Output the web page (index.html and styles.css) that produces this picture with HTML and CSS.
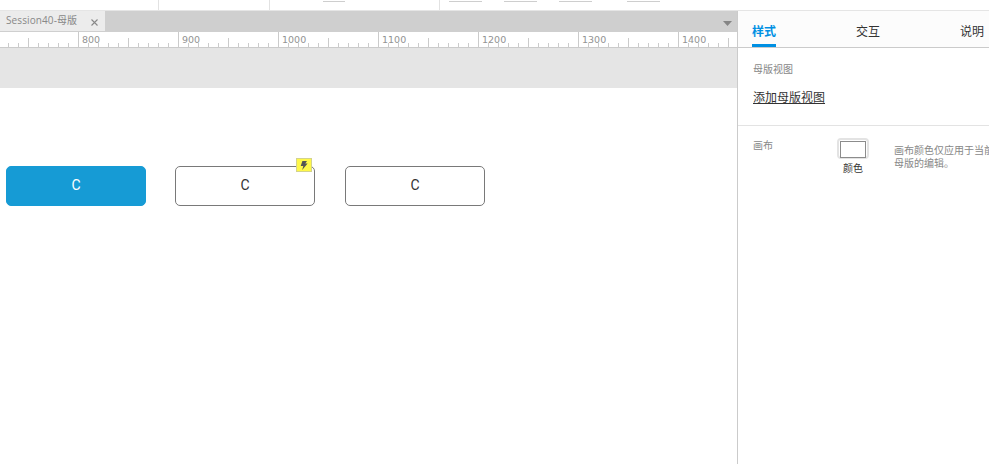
FILE: index.html
```html
<!DOCTYPE html>
<html lang="zh-CN">
<head>
<meta charset="utf-8">
<title>Session40-母版</title>
<link rel="stylesheet" href="styles.css">
</head>
<body>
<header class="toolbar">
  <div class="group g1"></div>
  <div class="group g2"></div>
  <div class="group g3"><span class="field short"></span></div>
  <div class="group g4"><span class="field"></span><span class="field"></span><span class="field"></span><span class="field last"></span></div>
</header>
<div class="workspace">
  <main class="editor">
    <div class="tabbar">
      <div class="file-tab"><span class="file-name">Session40-母版</span>
        <svg class="close" width="7" height="7" viewBox="0 0 7 7"><path d="M.5.5l6 6M6.5.5l-6 6"/></svg>
      </div>
      <svg class="caret" width="9" height="5" viewBox="0 0 9 5"><path d="M0 0h9L4.5 5z"/></svg>
    </div>
    <div class="ruler"><span>800</span><span>900</span><span>1000</span><span>1100</span><span>1200</span><span>1300</span><span>1400</span></div>
    <div class="outside"></div>
    <div class="canvas">
      <div class="button primary">C</div>
      <div class="button">C
        <span class="event"><svg width="8" height="9" viewBox="0 0 8 9"><path d="M2.4 0H7L5.3 2.6H7.6L2.2 9 3.3 4.9H.7z"/></svg></span>
      </div>
      <div class="button">C</div>
    </div>
  </main>
  <aside class="panel">
    <nav class="panel-tabs"><span class="active">样式</span><span>交互</span><span>说明</span></nav>
    <section class="views">
      <h2>母版视图</h2>
      <a class="add">添加母版视图</a>
    </section>
    <section class="fill">
      <h2>画布</h2>
      <div class="color"><span class="swatch"></span><span class="label">颜色</span></div>
      <p class="hint">画布颜色仅应用于当前<br>母版的编辑。</p>
    </section>
  </aside>
</div>
</body>
</html>
```
FILE: styles.css
```css
* { box-sizing: border-box; }
body {
  margin: 0;
  width: 989px;
  height: 464px;
  overflow: hidden;
  background: #fff;
  color: #333;
  font-family: "Open Sans", "Noto Sans CJK SC", sans-serif;
  font-size: 12px;
}
.toolbar { display: flex; height: 11px; border-bottom: 1px solid #e5e5e5; }
.group { display: flex; border-right: 1px solid #e2e2e2; }
.g1 { width: 159px; }
.g2 { width: 111px; }
.g3 { width: 170px; padding-left: 53px; }
.g4 { flex: 1; border: 0; padding-left: 9px; gap: 22px; }
.field { width: 33px; height: 2px; border-bottom: 1px solid #cecece; }
.short { width: 22px; }
.last { margin-left: 13px; }
.workspace { display: flex; height: 453px; }
.editor { width: 737px; display: flex; flex-direction: column; }
.tabbar {
  display: flex;
  justify-content: space-between;
  height: 21px;
  padding-right: 5px;
  background: #cfcfcf;
}
.file-tab {
  display: flex;
  align-items: flex-start;
  justify-content: space-between;
  width: 105px;
  height: 20px;
  padding: 0 7px 0 6px;
  background: #ececec;
  color: #888;
}
.file-name { font-size: 10px; letter-spacing: 0.1px; line-height: 18px; white-space: nowrap; }
.close { margin-top: 8px; fill: none; stroke: #888; stroke-width: 1.1; }
.caret { margin-top: 10px; fill: #858585; }
.ruler {
  display: flex;
  height: 16px;
  padding-left: 82px;
  border-bottom: 1px solid #cbcbcb;
  background:
    linear-gradient(90deg, #cbcbcb 1px, transparent 1px) 78px 0 / 100px 15px repeat-x,
    linear-gradient(90deg, #cbcbcb 1px, transparent 1px) 28px 6px / 100px 9px repeat-x,
    linear-gradient(90deg, #cbcbcb 1px, transparent 1px) 8px 11px / 10px 4px repeat-x;
}
.ruler span { width: 100px; flex: none; font: 9.5px/16px "DejaVu Sans", sans-serif; color: #929292; }
.ruler span:last-child { width: 40px; }
.outside { height: 40px; background: #e5e5e5; }
.canvas { display: flex; gap: 30px; padding: 78px 0 0 6px; }
.button {
  position: relative;
  width: 140px;
  height: 40px;
  border: 1px solid #797979;
  border-radius: 5px;
  font: 14px/37px Roboto, "Liberation Sans", sans-serif;
  text-align: center;
}
.button + .button { margin-left: -1px; }
.button + .button + .button { margin-left: 0; }
.button.primary { border-color: #169bd5; background: #169bd5; color: #fff; }
.event {
  position: absolute;
  top: -9px;
  right: 2px;
  display: flex;
  align-items: center;
  justify-content: center;
  width: 16px;
  height: 14px;
  border: 1px solid #d3d38d;
  background: #fff849;
}
.event svg { fill: #555; }
.panel { width: 252px; border-left: 1px solid #cbcbcb; overflow: hidden; white-space: nowrap; }
.panel-tabs {
  display: flex;
  gap: 80px;
  height: 37px;
  padding-left: 14px;
  border-bottom: 1px solid #cbcbcb;
  background: #fcfcfc;
  line-height: 42px;
}
.panel-tabs span { width: 24px; flex: none; }
.panel-tabs .active { height: 36px; border-bottom: 3px solid #0090e3; color: #0090e3; font-weight: bold; }
h2 { margin: 0; font-size: 10px; font-weight: 400; line-height: 14px; color: #888; }
.views { height: 78px; padding: 14px 15px 0; border-bottom: 1px solid #e3e3e3; }
.add { display: block; width: 72px; height: 14px; margin-top: 13px; line-height: 18px; text-decoration: underline; text-underline-offset: 1px; }
.fill { display: flex; padding: 12px 0 0 15px; }
.fill h2 { width: 84px; flex: none; }
.color { display: flex; flex-direction: column; align-items: center; width: 32px; flex: none; }
.swatch {
  width: 32px;
  height: 21px;
  border: 2px solid #e3e3e3;
  border-radius: 4px;
  padding: 1px;
}
.swatch::before { content: ""; display: block; height: 15px; border: 1px solid #8c8c8c; }
.label { margin-top: 2px; font-size: 10px; line-height: 15px; }
.hint { margin: 6px 0 0 25px; font-size: 10px; line-height: 13px; color: #888; }
```
